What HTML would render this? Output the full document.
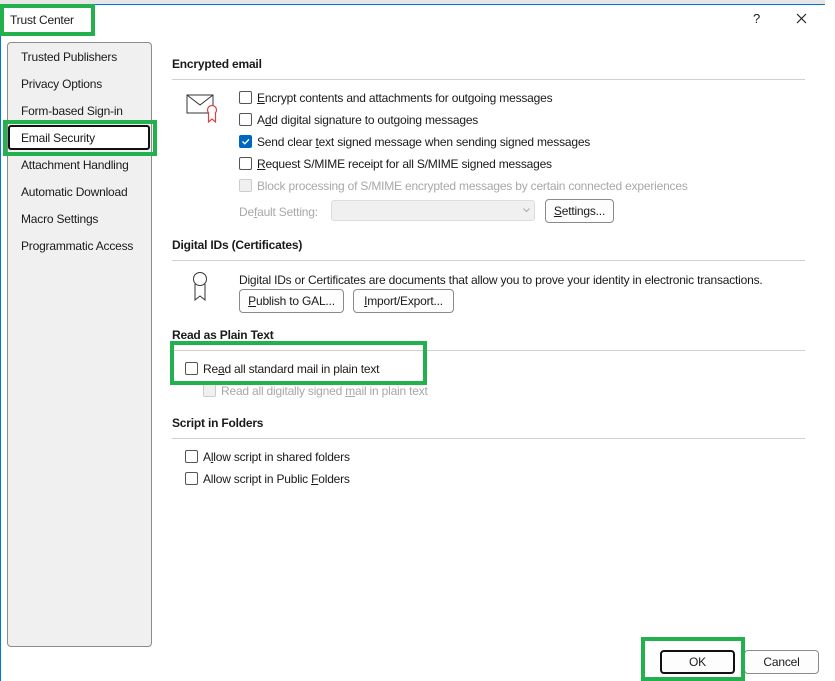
<!DOCTYPE html>
<html><head><meta charset="utf-8"><style>
*{box-sizing:border-box;margin:0;padding:0}
body{width:835px;height:681px;background:#fff;position:relative;overflow:hidden;font-family:"Liberation Sans",sans-serif;font-size:12px;color:#1a1a1a;letter-spacing:-0.2px}
.a{position:absolute;white-space:nowrap}
.cb{position:absolute;width:13px;height:13px;border:1px solid #555;border-radius:2px;background:#fff}
.cb.dis{border-color:#ccc;background:#f0f0f0}
.cb.on{background:#0067c0;border-color:#0067c0}
.h{position:absolute;font-weight:bold;font-size:12px;color:#1a1a1a;white-space:nowrap}
.ln{position:absolute;left:172px;width:633px;height:1px;background:#d0d0d0}
.btn{position:absolute;border:1px solid #8a8a8a;border-radius:4px;background:#fdfdfd;text-align:center;font-size:12px}
.g{position:absolute;border:4px solid #22b14c}
.nav{position:absolute;left:21px;font-size:12px;white-space:nowrap}
.dim{color:#a8a8a8}
</style></head><body>
<div class="a" style="left:0;top:0;width:826px;height:4px;background:#e6e6e6"></div>
<div class="a" style="left:0;top:4px;width:826px;height:1px;background:#0078d4"></div>
<div class="a" style="left:0;top:4px;width:1px;height:677px;background:#0078d4"></div>
<div class="a" style="left:825px;top:0;width:10px;height:681px;background:#fff"></div>
<div class="a" style="left:10px;top:13px;font-size:12px">Trust Center</div>
<div class="a" style="left:753px;top:11px;font-size:13px">?</div>
<svg class="a" style="left:796px;top:13px" width="11" height="11"><path d="M1 1L10 10M10 1L1 10" stroke="#222" stroke-width="1.2"/></svg>

<div class="a" style="left:7px;top:42px;width:145px;height:605px;background:#f0f0f0;border:1px solid #8c8c8c;border-radius:4px"></div>
<div class="nav" style="top:50px">Trusted Publishers</div>
<div class="nav" style="top:77px">Privacy Options</div>
<div class="nav" style="top:104px">Form-based Sign-in</div>
<div class="a" style="left:8px;top:125px;width:142px;height:25px;background:#fff;border:2px solid #111;border-radius:3px"></div>
<div class="nav" style="top:131px">Email Security</div>
<div class="nav" style="top:158px">Attachment Handling</div>
<div class="nav" style="top:185px">Automatic Download</div>
<div class="nav" style="top:212px">Macro Settings</div>
<div class="nav" style="top:239px">Programmatic Access</div>

<div class="h" style="left:172px;top:57px">Encrypted email</div>
<div class="ln" style="top:79px"></div>
<svg class="a" style="left:186px;top:94px" width="34" height="30"><rect x="1" y="1" width="26" height="18" fill="#fff" stroke="#333"/><path d="M1 1L14 11L27 1" fill="none" stroke="#333"/><circle cx="26" cy="16" r="4.5" fill="#fff" stroke="#e04040" stroke-width="1.2"/><path d="M22.5 19V28L26 25L29.5 28V19" fill="#fff" stroke="#e04040" stroke-width="1.2"/></svg>
<div class="cb" style="left:239px;top:91px"></div><div class="a" style="left:257px;top:91px"><u>E</u>ncrypt contents and attachments for outgoing messages</div>
<div class="cb" style="left:239px;top:113px"></div><div class="a" style="left:257px;top:113px">A<u>d</u>d digital signature to outgoing messages</div>
<div class="cb on" style="left:239px;top:135px"><svg width="11" height="11" style="position:absolute;left:0;top:0"><path d="M2.5 5.5L4.8 7.8L9 3.3" fill="none" stroke="#fff" stroke-width="1.4"/></svg></div><div class="a" style="left:257px;top:135px">Send clear <u>t</u>ext signed message when sending signed messages</div>
<div class="cb" style="left:239px;top:157px"></div><div class="a" style="left:257px;top:157px"><u>R</u>equest S/MIME receipt for all S/MIME signed messages</div>
<div class="cb dis" style="left:239px;top:179px"></div><div class="a dim" style="left:257px;top:179px">Block processing of S/MIME encrypted messages by certain connected experiences</div>
<div class="a dim" style="left:239px;top:205px">De<u>f</u>ault Setting:</div>
<div class="a" style="left:331px;top:200px;width:204px;height:21px;background:#f0f0f0;border:1px solid #ddd;border-radius:3px"></div>
<svg class="a" style="left:523px;top:208px" width="7" height="5"><path d="M0.5 0.5L3.5 3.5L6.5 0.5" fill="none" stroke="#aaa"/></svg>
<div class="btn" style="left:545px;top:199px;width:69px;height:24px;line-height:22px"><u>S</u>ettings...</div>

<div class="h" style="left:172px;top:238px">Digital IDs (Certificates)</div>
<div class="ln" style="top:260px"></div>
<svg class="a" style="left:190px;top:271px" width="20" height="32"><circle cx="10" cy="8" r="6.5" fill="#fff" stroke="#333"/><path d="M5 13V29L10 25L15 29V13" fill="none" stroke="#333"/></svg>
<div class="a" style="left:239px;top:273px">Digital IDs or Certificates are documents that allow you to prove your identity in electronic transactions.</div>
<div class="btn" style="left:239px;top:289px;width:105px;height:24px;line-height:22px"><u>P</u>ublish to GAL...</div>
<div class="btn" style="left:353px;top:289px;width:101px;height:24px;line-height:22px"><u>I</u>mport/Export...</div>

<div class="h" style="left:172px;top:328px">Read as Plain Text</div>
<div class="ln" style="top:350px"></div>
<div class="cb" style="left:185px;top:362px"></div><div class="a" style="left:203px;top:362px">Re<u>a</u>d all standard mail in plain text</div>
<div class="cb dis" style="left:203px;top:384px"></div><div class="a dim" style="left:221px;top:384px">Read all digitally signed <u>m</u>ail in plain text</div>

<div class="h" style="left:172px;top:416px">Script in Folders</div>
<div class="ln" style="top:438px"></div>
<div class="cb" style="left:185px;top:450px"></div><div class="a" style="left:203px;top:450px">A<u>l</u>low script in shared folders</div>
<div class="cb" style="left:185px;top:472px"></div><div class="a" style="left:203px;top:472px">Allow script in Public <u>F</u>olders</div>

<div class="btn" style="left:660px;top:650px;width:75px;height:24px;line-height:20px;border:2px solid #111">OK</div>
<div class="btn" style="left:744px;top:650px;width:75px;height:24px;line-height:22px">Cancel</div>

<div class="g" style="left:0;top:4px;width:95px;height:32px"></div>
<div class="g" style="left:3px;top:120px;width:154px;height:36px"></div>
<div class="g" style="left:170px;top:341px;width:257px;height:44px"></div>
<div class="g" style="left:641px;top:637px;width:104px;height:44px"></div>
</body></html>
